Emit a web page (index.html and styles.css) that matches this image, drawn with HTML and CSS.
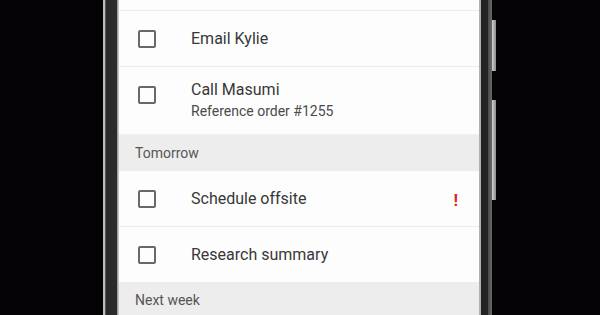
FILE: index.html
```html
<!DOCTYPE html>
<html lang="en">
<head>
    <meta charset="UTF-8">
    <meta name="viewport" content="width=device-width, initial-scale=1.0">
    <title>Tasks</title>
    <link rel="stylesheet" href="styles.css">
</head>
<body>
    <div class="phone">
        <div class="bezel-left"></div>
        <div class="screen">
            <div class="row-top"></div>

            <div class="task">
                <span class="check"></span>
                <div class="task-text">
                    <div class="title">Email Kylie</div>
                </div>
            </div>
            <div class="task tall">
                <span class="check"></span>
                <div class="task-text">
                    <div class="title">Call Masumi</div>
                    <div class="sub">Reference order #1255</div>
                </div>
            </div>

            <div class="group">Tomorrow</div>

            <div class="task">
                <span class="check"></span>
                <div class="task-text">
                    <div class="title">Schedule offsite</div>
                </div>
                <span class="flag">!</span>
            </div>
            <div class="task last">
                <span class="check"></span>
                <div class="task-text">
                    <div class="title">Research summary</div>
                </div>
            </div>

            <div class="group">Next week</div>
        </div>
        <div class="bezel-right"></div>
        <div class="keys">
            <div class="key key-power"></div>
            <div class="key key-volume"></div>
        </div>
    </div>
</body>
</html>
```

FILE: styles.css
```css
body {
    margin: 0;
    padding: 0 0 0 103px;
    height: 315px;
    overflow: hidden;
    background: #050305;
    font-family: Roboto, "Noto Sans", sans-serif;
}
.phone {
    display: flex;
    height: 315px;
}
.bezel-left {
    width: 16px;
    background: linear-gradient(to right, #bdbdbd 0, #bdbdbd 2px, #5a5a5a 2px, #5a5a5a 3px, #2b2b2b 3px, #2b2b2b 14px, #8a8a8a 14px, #d8d8d8 16px);
}
.screen {
    width: 360px;
    background: #fdfdfd;
    color: #333;
}
.row-top {
    height: 10px;
    border-bottom: 1px solid #ececec;
}
.task {
    display: flex;
    align-items: center;
    height: 55px;
    border-bottom: 1px solid #ececec;
}
.task.tall {
    height: 67px;
    border-bottom-color: #f1f1f1;
}
.task.last {
    border-bottom: none;
}
.check {
    align-self: flex-start;
    margin: 19px 0 0 19px;
    width: 14px;
    height: 14px;
    border: 2px solid #686868;
    border-radius: 2px;
    flex-shrink: 0;
}
.task-text {
    margin-left: 35px;
    flex: 1;
}
.title {
    font-size: 16px;
    line-height: 20px;
    color: #383838;
}
.sub {
    font-size: 14px;
    line-height: 20px;
    color: #4a4a4a;
    margin-top: 1px;
}
.flag {
    color: #e4251f;
    font-weight: 700;
    font-size: 17px;
    margin: 2px 21px 0 0;
}
.group {
    height: 36px;
    line-height: 37px;
    padding-left: 16px;
    background: #eeedee;
    color: #555;
    font-size: 14px;
}
.bezel-right {
    width: 13px;
    background: linear-gradient(to right, #b0b0b0 0, #b0b0b0 2px, #232323 2px, #232323 9px, #4a4a4a 9px, #6a6a6a 13px);
}
.keys {
    width: 4px;
}
.key {
    background: linear-gradient(to right, #d0d0d0, #8a8a8a);
}
.key-power {
    margin-top: 20px;
    height: 51px;
}
.key-volume {
    margin-top: 29px;
    height: 100px;
}
```
